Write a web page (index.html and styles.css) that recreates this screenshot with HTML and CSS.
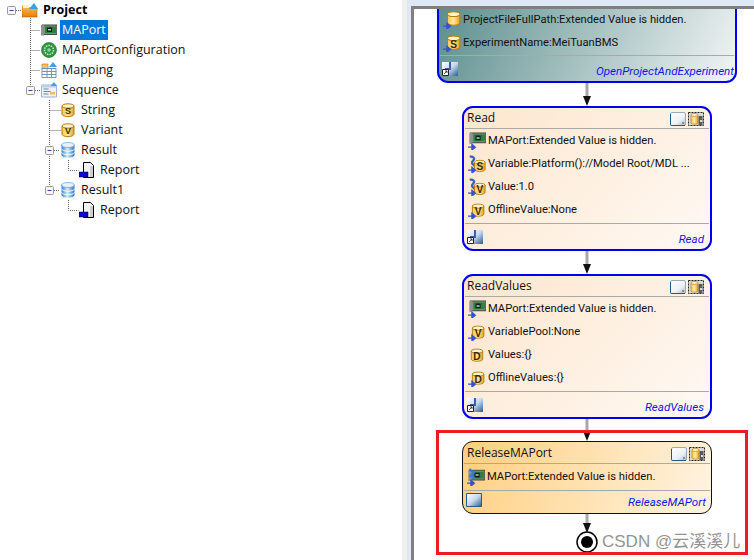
FILE: index.html
```html
<!DOCTYPE html>
<html lang="en">
<head>
<meta charset="utf-8">
<title>Sequence</title>
<link rel="stylesheet" href="styles.css">
</head>
<body>
<svg class="defs" width="0" height="0" aria-hidden="true">
  <defs>
    <linearGradient id="gGold" x1="0" y1="0" x2="1" y2="0"><stop offset="0" stop-color="#f7c94f"/><stop offset=".5" stop-color="#ffe9a0"/><stop offset="1" stop-color="#e5a01e"/></linearGradient>
    <linearGradient id="gBlue" x1="0" y1="0" x2="1" y2="0"><stop offset="0" stop-color="#2f7fd0"/><stop offset=".45" stop-color="#d5ecff"/><stop offset="1" stop-color="#2b78c8"/></linearGradient>
    <linearGradient id="gOrange" x1="0" y1="0" x2="0" y2="1"><stop offset="0" stop-color="#ffc04d"/><stop offset="1" stop-color="#e97a12"/></linearGradient>
    <linearGradient id="gBtn" x1="0" y1="0" x2="1" y2="1"><stop offset="0" stop-color="#fff"/><stop offset=".6" stop-color="#eef1f5"/><stop offset="1" stop-color="#b5bcc6"/></linearGradient>
    <linearGradient id="gFoot" x1="0" y1="0" x2="1" y2="1"><stop offset="0" stop-color="#fff"/><stop offset=".5" stop-color="#c5d9ef"/><stop offset="1" stop-color="#2c5a92"/></linearGradient>
    <symbol id="arrowIn" viewBox="0 0 16 16"><path d="M0 13.500h5M3.500 11l3 2.500-3 2.500z" fill="#3a4fd8" stroke="#3a4fd8" stroke-width="1.200"/></symbol>
    <symbol id="card" viewBox="0 0 16 12"><path d="M1 1h15v9.500H1z" fill="#7f9078" stroke="#3f4a42"/><path d="M0 1h3v10.500H0z" fill="#8f8f96"/><path d="M4 2.500h11v6.500H4z" fill="#2b7f40"/><path d="M6 3.500h5v4.500H6z" fill="#141d17"/><path d="M7 5h3v1.500H7z" fill="#a6d6b0"/></symbol>
    <symbol id="cyl" viewBox="0 0 14 14"><path d="M1 3v8c0 1.600 2.700 2.600 6 2.600s6-1 6-2.600V3z" fill="url(#gGold)" stroke="#b87a10"/><ellipse cx="7" cy="3" rx="6" ry="2.200" fill="#fff2c4" stroke="#b87a10"/></symbol>
    <symbol id="db" viewBox="0 0 14 16"><path d="M.5 3v10c0 1.600 2.900 2.700 6.500 2.700s6.500-1.100 6.500-2.700V3z" fill="url(#gBlue)"/><ellipse cx="7" cy="3" rx="6.500" ry="2.500" fill="#e4f3ff" stroke="#4b93d8" stroke-width=".6"/><path d="M.5 7c1 1.500 3.500 2.200 6.500 2.200S12.500 8.500 13.500 7M.5 10.500c1 1.500 3.500 2.200 6.500 2.200s5.500-.7 6.500-2.200" fill="none" stroke="#fff" stroke-width=".9"/></symbol>
    <symbol id="swirl" viewBox="0 0 16 16"><path d="M1.500 1.500c3.500-.5 5 1.500 3 3.500s-1 4 2.500 4" fill="none" stroke="#3a62c8" stroke-width="2"/><path d="M5 6.500l3 2.500-3.500 1.500z" fill="#3a62c8"/></symbol>
    <symbol id="btnPlain" viewBox="0 0 16 14"><rect x=".5" y=".5" width="15" height="13" rx="1.500" fill="url(#gBtn)" stroke="#9aa8b8"/><path d="M.5 2v10.500q0 1 1 1H15" fill="none" stroke="#23577f"/><path d="M12 10h2v2h-2z" fill="#8a8f96"/></symbol>
    <symbol id="btnData" viewBox="0 0 16 14"><rect x=".5" y=".5" width="15" height="13" fill="#d9d9d9" stroke="#222" stroke-dasharray="2 1"/><path d="M10.500 4h4v9h-4z" fill="#5a5a5a"/><path d="M3 3v8c0 1.500 7 1.500 7 0V3z" fill="url(#gGold)" stroke="#c77f10" stroke-width=".7"/><ellipse cx="6.500" cy="3" rx="3.500" ry="1.500" fill="#fff2c4" stroke="#c77f10" stroke-width=".7"/><path d="M12 8h2v2h-2z" fill="#ddd"/></symbol>
    <symbol id="footLink" viewBox="0 0 16 14"><path d="M0 0h16v14H0z" fill="url(#gFoot)"/><path d="M7 0h2v7H7zM3 6h6v2H3z" fill="#3b5fa8"/><path d="M.5 7.500h6v6h-6z" fill="#fff" stroke="#222"/><path d="M2 12l3-3M3 9h2v2" fill="none" stroke="#222" stroke-width=".8"/></symbol>
    <symbol id="report" viewBox="0 0 16 16"><path d="M4.500.5h7l3 3v12h-10z" fill="#f2f2f2" stroke="#000"/><path d="M11 4h3v11h-3z" fill="#cfcfcf"/><path d="M0 10h9v5H0z" fill="#0a0ad8" stroke="#000" stroke-width=".5"/></symbol>
  </defs>
</svg>

<main class="shell">
  <nav class="tree">
    <svg class="tree-lines" width="100" height="220" aria-hidden="true">
      <path class="dots" d="M16 10.500h5M30.500 18v68M30.500 30.500h10M30.500 50.500h10M30.500 70.500h10M35 90.500h6M49.500 100v86M49.500 110.500h11M49.500 130.500h11M54 150.500h6M68.500 160v10.500h10M54 190.500h6M68.500 200v10.500h10"/>
      <g class="toggle"><rect x="7.500" y="6.500" width="8" height="8" rx="1"/><path d="M9.500 10.500h4"/></g>
      <g class="toggle"><rect x="26.500" y="86.500" width="8" height="8" rx="1"/><path d="M28.500 90.500h4"/></g>
      <g class="toggle"><rect x="45.500" y="146.500" width="8" height="8" rx="1"/><path d="M47.500 150.500h4"/></g>
      <g class="toggle"><rect x="45.500" y="186.500" width="8" height="8" rx="1"/><path d="M47.500 190.500h4"/></g>
    </svg>
    <ul class="tree-list">
      <li class="tree-row lvl-root">
        <svg class="ti ti-folder" viewBox="0 0 16 15"><path d="M0 3h6l1.500 2H15v9H0z" fill="url(#gOrange)" stroke="#a8660e" stroke-width=".6"/><path d="M1 2h6v3H1z" fill="#fff3d8"/><path d="M7 6l5-6 4 6z" fill="#3f9fe0"/></svg>
        <span class="tree-label tree-label--root">Project</span>
      </li>
      <li class="tree-row lvl-1">
        <svg class="ti"><use href="#card"/></svg>
        <span class="tree-label tree-label--sel">MAPort</span>
      </li>
      <li class="tree-row lvl-1">
        <svg class="ti" viewBox="0 0 16 16"><circle cx="8" cy="8" r="7.500" fill="#2e9440" stroke="#1f6b2e" stroke-width=".6"/><circle cx="8" cy="8" r="4.500" fill="none" stroke="#c5ecc9" stroke-dasharray="1.500 1" stroke-width="1.500"/><circle cx="8" cy="8" r="1.800" fill="#8fd89a"/></svg>
        <span class="tree-label">MAPortConfiguration</span>
      </li>
      <li class="tree-row lvl-1">
        <svg class="ti" viewBox="0 0 16 16"><path d="M1 2h6v5H1z" fill="#f4c252" stroke="#b87a10" stroke-width=".6"/><path d="M1 6.500h14v9H1z" fill="#fff" stroke="#6f95bd"/><path d="M1 9.500h14M1 12.500h14M6 6.500v9M10.500 6.500v9" stroke="#6f95bd" fill="none"/><path d="M8 5l4-5 4 5z" fill="#3f9fe0"/></svg>
        <span class="tree-label">Mapping</span>
      </li>
      <li class="tree-row lvl-1">
        <svg class="ti" viewBox="0 0 16 16"><path d="M.5 3h15v12H.5z" fill="#eef2fa" stroke="#9fb1cf"/><path d="M.5 3h15v2.500H.5z" fill="#bcd0ea"/><path d="M2.500 7h5M2.500 9.500h7M2.500 12h5" stroke="#6a84b8" fill="none"/><path d="M9 10h5v2.500H9z" fill="#f0c050"/><path d="M9.500 4l3.500-4 3 4z" fill="#3f9fe0"/></svg>
        <span class="tree-label">Sequence</span>
      </li>
      <li class="tree-row lvl-2">
        <svg class="ti ti-cyl"><use href="#cyl"/><text x="7" y="12" class="cyl-letter">S</text></svg>
        <span class="tree-label">String</span>
      </li>
      <li class="tree-row lvl-2">
        <svg class="ti ti-cyl"><use href="#cyl"/><text x="7" y="12" class="cyl-letter">V</text></svg>
        <span class="tree-label">Variant</span>
      </li>
      <li class="tree-row lvl-2">
        <svg class="ti ti-cyl"><use href="#db"/></svg>
        <span class="tree-label">Result</span>
      </li>
      <li class="tree-row lvl-3">
        <svg class="ti ti-rep"><use href="#report"/></svg>
        <span class="tree-label">Report</span>
      </li>
      <li class="tree-row lvl-2">
        <svg class="ti ti-cyl"><use href="#db"/></svg>
        <span class="tree-label">Result1</span>
      </li>
      <li class="tree-row lvl-3">
        <svg class="ti ti-rep"><use href="#report"/></svg>
        <span class="tree-label">Report</span>
      </li>
    </ul>
  </nav>

  <div class="gutter"></div>

  <section class="work">
    <div class="canvas">
      <svg class="links" width="340" height="551" aria-hidden="true">
        <g class="link"><path d="M173 74v14"/><path class="head" d="M169 87h8l-4 10z"/></g>
        <g class="link"><path d="M173 241v14"/><path class="head" d="M169 255h8l-4 10z"/></g>
        <g class="link"><path d="M173 409v14"/><path class="head" d="M169 422h8l-4 10z"/></g>
        <g class="link"><path d="M173 505v10"/><path class="head" d="M169 514h8l-4 10z"/></g>
        <circle cx="173" cy="533" r="10" fill="#fff" stroke="#000" stroke-width="1.500"/>
        <circle cx="173" cy="533" r="6" fill="#000"/>
      </svg>

      <article class="node node--top">
        <div class="rows rows--top">
          <div class="row">
            <svg class="ri" viewBox="0 0 16 16"><use href="#cyl" x="3" y="0" width="13" height="13"/><use href="#arrowIn" width="16" height="16"/></svg>
            <span>ProjectFileFullPath:Extended Value is hidden.</span>
          </div>
          <div class="row">
            <svg class="ri" viewBox="0 0 16 16"><use href="#cyl" x="3" y="1" width="13" height="13"/><text x="9.500" y="12" class="cyl-letter">S</text><use href="#arrowIn" width="16" height="16"/></svg>
            <span>ExperimentName:MeiTuanBMS</span>
          </div>
        </div>
        <div class="foot foot--top">
          <svg class="fi"><use href="#footLink"/></svg>
          <em class="kind">OpenProjectAndExperiment</em>
        </div>
      </article>

      <article class="node node--read">
        <header class="head-row">
          <span>Read</span>
          <span class="btns">
            <svg class="btn"><use href="#btnPlain"/></svg>
            <svg class="btn"><use href="#btnData"/></svg>
          </span>
        </header>
        <div class="rows">
          <div class="row"><svg class="ri" viewBox="0 0 16 16"><use href="#card" x="1" y="0" width="15" height="11"/><use href="#arrowIn" width="16" height="16"/></svg><span>MAPort:Extended Value is hidden.</span></div>
          <div class="row"><svg class="ri" viewBox="0 0 16 16"><use href="#swirl" width="16" height="16"/><use href="#cyl" x="5" y="4" width="11" height="11"/><text x="10.500" y="13.500" class="cyl-letter">S</text><use href="#arrowIn" width="16" height="16"/></svg><span>Variable:Platform()://Model Root/MDL ...</span></div>
          <div class="row"><svg class="ri" viewBox="0 0 16 16"><use href="#swirl" width="16" height="16"/><use href="#cyl" x="5" y="4" width="11" height="11"/><text x="10.500" y="13.500" class="cyl-letter">V</text><use href="#arrowIn" width="16" height="16"/></svg><span>Value:1.0</span></div>
          <div class="row"><svg class="ri" viewBox="0 0 16 16"><use href="#cyl" x="3" y="2" width="12" height="12"/><text x="9" y="12.500" class="cyl-letter">V</text><use href="#arrowIn" width="16" height="16"/></svg><span>OfflineValue:None</span></div>
        </div>
        <div class="foot">
          <svg class="fi"><use href="#footLink"/></svg>
          <em class="kind">Read</em>
        </div>
      </article>

      <article class="node node--values">
        <header class="head-row">
          <span>ReadValues</span>
          <span class="btns">
            <svg class="btn"><use href="#btnPlain"/></svg>
            <svg class="btn"><use href="#btnData"/></svg>
          </span>
        </header>
        <div class="rows">
          <div class="row"><svg class="ri" viewBox="0 0 16 16"><use href="#card" x="1" y="0" width="15" height="11"/><use href="#arrowIn" width="16" height="16"/></svg><span>MAPort:Extended Value is hidden.</span></div>
          <div class="row"><svg class="ri" viewBox="0 0 16 16"><use href="#cyl" x="3" y="2" width="12" height="12"/><text x="9" y="12.500" class="cyl-letter">V</text><use href="#arrowIn" width="16" height="16"/></svg><span>VariablePool:None</span></div>
          <div class="row"><svg class="ri" viewBox="0 0 16 16"><use href="#cyl" x="2" y="2" width="12" height="12"/><text x="8" y="12.500" class="cyl-letter">D</text></svg><span>Values:{}</span></div>
          <div class="row"><svg class="ri" viewBox="0 0 16 16"><use href="#cyl" x="3" y="2" width="12" height="12"/><text x="9" y="12.500" class="cyl-letter">D</text><use href="#arrowIn" width="16" height="16"/></svg><span>OfflineValues:{}</span></div>
        </div>
        <div class="foot">
          <svg class="fi"><use href="#footLink"/></svg>
          <em class="kind">ReadValues</em>
        </div>
      </article>

      <article class="node node--release">
        <header class="head-row head-row--release">
          <span>ReleaseMAPort</span>
          <span class="btns">
            <svg class="btn"><use href="#btnPlain"/></svg>
            <svg class="btn"><use href="#btnData"/></svg>
          </span>
        </header>
        <div class="rows rows--release">
          <div class="row"><svg class="ri" viewBox="0 0 16 16"><use href="#card" x="1" y="1" width="15" height="11"/><path d="M2 1l4 3-3 3 4 2" fill="none" stroke="#3a7ad8" stroke-width="2"/><use href="#arrowIn" width="16" height="16"/></svg><span>MAPort:Extended Value is hidden.</span></div>
        </div>
        <div class="foot foot--release">
          <svg class="fi" viewBox="0 0 16 14"><path d="M.5.500h15v13H.5z" fill="url(#gFoot)" stroke="#2c5a86"/></svg>
          <em class="kind">ReleaseMAPort</em>
        </div>
      </article>

      <div class="highlight"></div>
      <div class="watermark">CSDN @云溪溪儿</div>
    </div>
  </section>
</main>
</body>
</html>
```

FILE: styles.css
```css
* { box-sizing: border-box; }
html, body { margin: 0; padding: 0; height: 100%; background: #fff; overflow: hidden; }
body { font-family: "Open Sans", "Noto Sans", sans-serif; color: #111; }
.defs { position: absolute; }

.shell { display: flex; height: 560px; width: 754px; }

/* tree */
.tree { position: relative; width: 402px; flex: none; background: #fff; }
.tree-lines { position: absolute; left: 0; top: 0; }
.dots { fill: none; stroke: #666; stroke-width: 1; stroke-dasharray: 1 1; }
.toggle rect { fill: #f4f6fa; stroke: #999; }
.toggle path { fill: none; stroke: #2c4f8c; }
.tree-list { position: relative; list-style: none; margin: 0; padding: 0; }
.tree-row { display: flex; align-items: center; height: 20px; font-size: 12.500px; }
.lvl-root { padding-left: 22px; }
.lvl-1 { padding-left: 41px; }
.lvl-2 { padding-left: 61px; }
.lvl-3 { padding-left: 79px; }
.ti { width: 16px; height: 16px; flex: none; }
.ti-folder { height: 15px; margin-right: 3px; }
.ti-cyl { width: 14px; height: 16px; margin-right: 4px; }
.ti-rep { width: 16px; height: 16px; margin-right: 3px; }
.tree-label { padding: 0 2px; margin-left: 3px; line-height: 20px; white-space: nowrap; }
.lvl-2 .tree-label, .lvl-3 .tree-label { margin-left: 0; }
.tree-label--root { font-weight: 700; color: #000; margin-left: 0; }
.tree-label--sel { background: #0078d7; color: #fff; }
.cyl-letter { font: 700 9px "Liberation Sans", sans-serif; fill: #3a2a00; text-anchor: middle; }

/* right side */
.gutter { width: 5px; flex: none; background: #f0f0f0; }
.work { flex: 1; min-width: 0; display: flex; padding: 6px 0 0 4px; background: #dfe8f5; }
.canvas { position: relative; flex: 1; min-width: 0; overflow: hidden; background: #fff; border-top: 3px solid #808080; border-left: 3px solid #808080; }

.links { position: absolute; left: 0; top: 0; }
.link path { fill: none; stroke: #a8a8a8; stroke-width: 3; }
.link .head { fill: #111; stroke: none; }

/* activity nodes */
.node { position: absolute; left: 48px; width: 250px; display: flex; flex-direction: column; border: 2.500px solid #0000f0; border-radius: 11px; background: linear-gradient(135deg, #fde6cd, #fff9f4); font-family: Roboto, "Open Sans", sans-serif; font-size: 11.200px; }
.node--top { left: 23px; top: -12px; width: 300px; height: 86px; background: linear-gradient(115deg, #5a8d8d 0, #f2f5f5 100%); }
.node--read { top: 97px; height: 145px; }
.node--values { top: 265px; height: 145px; }
.node--release { top: 432px; height: 73px; border: 1.500px solid #111; background: linear-gradient(110deg, #ffcf80, #fff4e2); }

.head-row { display: flex; align-items: center; justify-content: space-between; height: 21px; padding: 0 5px 2px 2px; border-bottom: 1.500px solid #a9a9a9; margin: 0 1px; flex: none; font-family: "Open Sans", sans-serif; font-size: 12px; }
.head-row--release { height: 22px; padding: 0 5px 1px 3px; }
.btns { display: flex; gap: 2px; padding-top: 4px; }
.btn { width: 16px; height: 14px; }
.rows { display: flex; flex-direction: column; padding: 0 3px; margin: 0 1px; border-bottom: 1.500px solid #a9a9a9; flex: 1; }
.rows--top { padding-top: 9px; }
.rows--release { padding-top: 1px; }
.row { display: flex; align-items: center; gap: 2px; height: 23px; white-space: nowrap; flex: none; }
.ri { width: 18px; height: 18px; flex: none; }
.foot { height: 25px; flex: none; padding: 6px 6px 0 3px; display: flex; justify-content: space-between; align-items: flex-start; }
.foot--top { padding-right: 1px; }
.foot--release { height: 22px; padding: 2px 5px 0 3px; }
.fi { width: 16px; height: 14px; flex: none; }
.kind { color: #1414e6; white-space: nowrap; font-size: 11.600px; padding-top: 2px; }

.highlight { position: absolute; left: 22px; top: 421px; width: 312px; height: 125px; border: 3px solid #ed1c24; }
.watermark { position: absolute; left: 188px; top: 522px; font-size: 17px; line-height: 22px; color: rgba(110, 110, 110, .75); text-shadow: 0 0 1px #fff; white-space: nowrap; font-family: "Liberation Sans", "Noto Sans CJK SC", sans-serif; }
```
